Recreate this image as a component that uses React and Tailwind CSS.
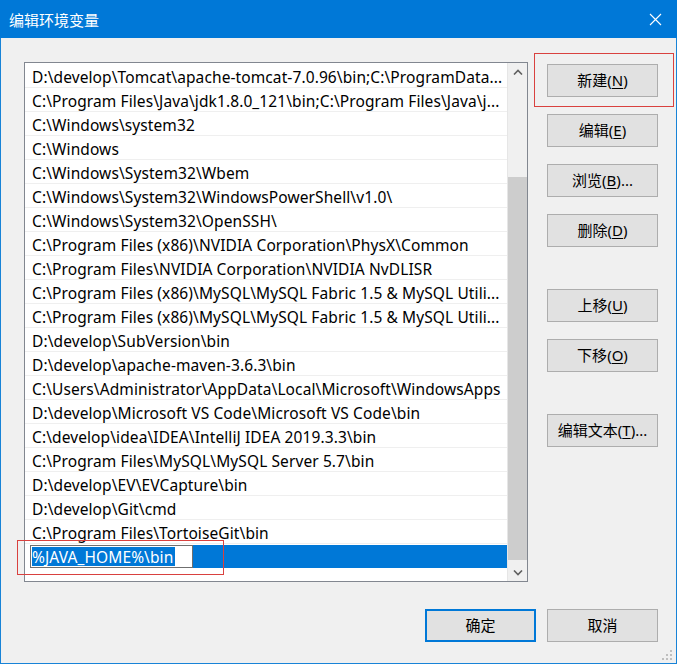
import React from 'react';

const paths = [
    'D:\\develop\\Tomcat\\apache-tomcat-7.0.96\\bin;C:\\ProgramData...',
    'C:\\Program Files\\Java\\jdk1.8.0_121\\bin;C:\\Program Files\\Java\\j...',
    'C:\\Windows\\system32',
    'C:\\Windows',
    'C:\\Windows\\System32\\Wbem',
    'C:\\Windows\\System32\\WindowsPowerShell\\v1.0\\',
    'C:\\Windows\\System32\\OpenSSH\\',
    'C:\\Program Files (x86)\\NVIDIA Corporation\\PhysX\\Common',
    'C:\\Program Files\\NVIDIA Corporation\\NVIDIA NvDLISR',
    'C:\\Program Files (x86)\\MySQL\\MySQL Fabric 1.5 & MySQL Utili...',
    'C:\\Program Files (x86)\\MySQL\\MySQL Fabric 1.5 & MySQL Utili...',
    'D:\\develop\\SubVersion\\bin',
    'D:\\develop\\apache-maven-3.6.3\\bin',
    'C:\\Users\\Administrator\\AppData\\Local\\Microsoft\\WindowsApps',
    'D:\\develop\\Microsoft VS Code\\Microsoft VS Code\\bin',
    'C:\\develop\\idea\\IDEA\\IntelliJ IDEA 2019.3.3\\bin',
    'C:\\Program Files\\MySQL\\MySQL Server 5.7\\bin',
    'D:\\develop\\EV\\EVCapture\\bin',
    'D:\\develop\\Git\\cmd',
    'C:\\Program Files\\TortoiseGit\\bin',
];

const uiFont = "font-[family-name:'Noto_Sans','Noto_Sans_CJK_SC',sans-serif]";

// Win10 style push button, label with an underlined access key
const Button = ({ label, accel, tail = '', primary = false }) => (
    <button
        className={
            'w-[111px] h-[33px] bg-[#e1e1e1] text-[15px] leading-none text-black flex items-center justify-center ' +
            (primary ? 'border-2 border-[#0078d7]' : 'border border-[#adadad]')
        }
    >
        {label}
        {accel && (
            <>
                (<span className="underline underline-offset-2">{accel}</span>){tail}
            </>
        )}
    </button>
);

const Chevron = ({ down = false }) => (
    <svg width="10" height="6" viewBox="0 0 10 6" className={down ? 'rotate-180' : ''}>
        <path d="M1 5.5 L5 1.5 L9 5.5" fill="none" stroke="#606060" strokeWidth="1.6" />
    </svg>
);

const App = () => {
    return (
        <div className={'w-[677px] h-[664px] flex flex-col bg-[#f0f0f0] ' + uiFont}>
            {/* title bar */}
            <div className="h-[38px] bg-[#0078d7] flex items-center justify-between pl-[9px] pr-[15px]">
                <span className="text-white text-[15px] leading-none font-[family-name:'Noto_Sans_CJK_SC',sans-serif]">
                    编辑环境变量
                </span>
                <svg width="13" height="13" viewBox="0 0 13 13">
                    <path d="M1 1 L12 12 M12 1 L1 12" stroke="#ffffff" strokeWidth="1.1" />
                </svg>
            </div>

            <div className="relative flex-1 flex flex-col border-x border-b border-[#1883d7] pl-[23px] pt-[24px]">
                <div className="flex">
                    {/* path list */}
                    <div className="w-[504px] h-[520px] border border-[#828790] bg-white flex">
                        <div className="flex-1 flex flex-col pt-[1px]">
                            {paths.map((p, i) => (
                                <div
                                    key={i}
                                    className="h-[24px] border-b border-[#efefef] flex items-center pl-[7px] pt-[4px] text-[15.5px] tracking-[0.1px] leading-none text-black whitespace-nowrap overflow-hidden"
                                >
                                    {p}
                                </div>
                            ))}
                            <div className="h-[24px] flex items-stretch pt-[1px]">
                                <div className="w-[5px] bg-white" />
                                <div className="w-[163px] h-[23px] border border-[#6f6f6f] bg-white flex items-center pl-[1px]">
                                    <span className="bg-[#0078d7] text-white text-[15.5px] tracking-[0.1px] leading-[19px] h-[19px] pt-[1px] pr-[2px]">
                                        %JAVA_HOME%\bin
                                    </span>
                                </div>
                                <div className="flex-1 bg-[#0078d7] h-[23px]" />
                            </div>
                        </div>
                        {/* vertical scrollbar */}
                        <div className="w-[20px] bg-[#f0f0f0] border-l border-[#e6e6e6] flex flex-col">
                            <div className="h-[17px] flex items-center justify-center">
                                <Chevron />
                            </div>
                            <div className="flex-1">
                                <div className="mt-[97px] h-[383px] bg-[#cdcdcd]" />
                            </div>
                            <div className="h-[17px] flex items-center justify-center">
                                <Chevron down />
                            </div>
                        </div>
                    </div>

                    {/* action buttons */}
                    <div className="ml-[19px] pt-[2px] flex flex-col">
                        <div className="flex flex-col gap-[17px]">
                            <Button label="新建" accel="N" />
                            <Button label="编辑" accel="E" />
                            <Button label="浏览" accel="B" tail="..." />
                            <Button label="删除" accel="D" />
                        </div>
                        <div className="mt-[42px] flex flex-col gap-[17px]">
                            <Button label="上移" accel="U" />
                            <Button label="下移" accel="O" />
                        </div>
                        <div className="mt-[42px]">
                            <Button label="编辑文本" accel="T" tail="..." />
                        </div>
                    </div>
                </div>

                {/* dialog buttons */}
                <div className="mt-[27px] ml-[401px] flex gap-[11px]">
                    <Button label="确定" primary />
                    <Button label="取消" />
                </div>

                {/* size grip */}
                <svg width="12" height="12" viewBox="0 0 12 12" className="absolute right-[2px] bottom-[1px]">
                    <g fill="#bfbfbf">
                        <rect x="8" y="0" width="2" height="2" />
                        <rect x="4" y="4" width="2" height="2" />
                        <rect x="8" y="4" width="2" height="2" />
                        <rect x="0" y="8" width="2" height="2" />
                        <rect x="4" y="8" width="2" height="2" />
                        <rect x="8" y="8" width="2" height="2" />
                    </g>
                </svg>

                {/* red markers */}
                <div className="absolute left-[533px] top-[15px] w-[140px] h-[54px] border border-[#d9413f]" />
                <div className="absolute left-[16px] top-[502px] w-[207px] h-[35px] border border-[#d9413f]" />
            </div>
        </div>
    );
};

export default App;
